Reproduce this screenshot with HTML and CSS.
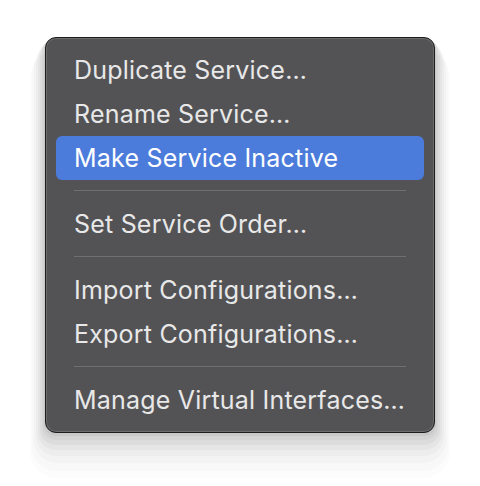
FILE: index.html
```html
<!DOCTYPE html>
<html lang="en">
<head>
  <meta charset="UTF-8">
  <title>Service menu</title>
  <link rel="stylesheet" href="styles.css">
</head>
<body>

  <div class="menu">
    <div class="item">Duplicate Service…</div>
    <div class="item">Rename Service…</div>
    <div class="item active">Make Service Inactive</div>
    <div class="sep"></div>
    <div class="item">Set Service Order…</div>
    <div class="sep"></div>
    <div class="item">Import Configurations…</div>
    <div class="item">Export Configurations…</div>
    <div class="sep"></div>
    <div class="item">Manage Virtual Interfaces…</div>
  </div>

</body>
</html>
```
FILE: styles.css
```css
body {
  margin: 0;
  min-height: 486px;
  overflow: hidden;
  background-color: #ffffff;
  font-family: Inter, "Noto Sans", sans-serif;
}
.menu {
  width: 368px;
  margin: 37px 0 0 45px;
  padding: 10px;
  background-color: #535356;
  border: 1px solid #1c1c1c;
  border-radius: 11px;
  box-shadow:
    inset 0 0 0 1px #6c6c6e,
    0 2px 0 1px rgba(0,0,0,0.05),
    0 4px 0 3px rgba(0,0,0,0.04),
    0 7px 0 5px rgba(0,0,0,0.035),
    0 10px 0 7px rgba(0,0,0,0.03),
    0 14px 0 9px rgba(0,0,0,0.025),
    0 19px 0 11px rgba(0,0,0,0.02),
    0 25px 0 13px rgba(0,0,0,0.015),
    0 30px 0 15px rgba(0,0,0,0.01);
}
.item {
  height: 44px;
  line-height: 44px;
  padding-left: 18px;
  font-size: 25px;
  letter-spacing: 0.2px;
  color: #e8e8e8;
  border-radius: 6px;
  white-space: nowrap;
}
.item.active {
  background-color: #4b7bdb;
  color: #ffffff;
}
.sep {
  height: 1px;
  margin: 10px 18px 11px;
  background-color: #6f6f71;
}
```
